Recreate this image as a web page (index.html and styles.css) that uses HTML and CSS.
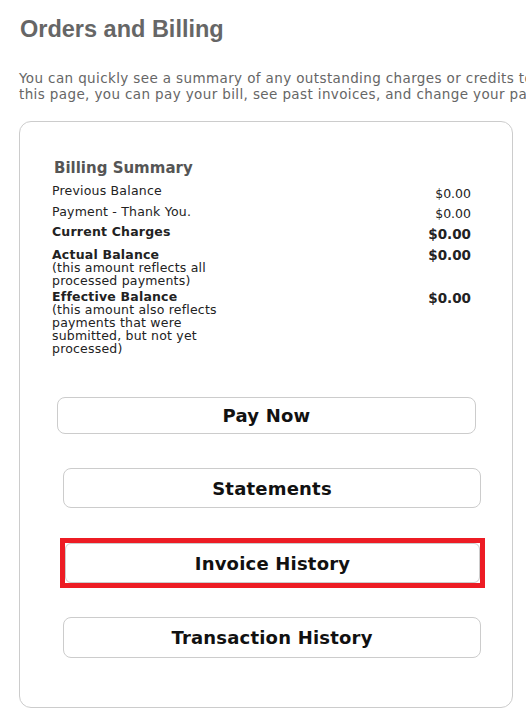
FILE: index.html
```html
<!DOCTYPE html>
<html>
<head>
<meta charset="utf-8">
<link rel="stylesheet" href="styles.css">
</head>
<body>
<div class="page">
  <h1 class="title">Orders and Billing</h1>
  <p class="intro">You can quickly see a summary of any outstanding charges or credits to your account. On<br>this page, you can pay your bill, see past invoices, and change your payment method.</p>
  <div class="card">
    <div class="summary">
      <h2 class="summary-title">Billing Summary</h2>
      <div class="row r1">
        <div class="label">Previous Balance</div>
        <div class="amount a1">$0.00</div>
      </div>
      <div class="row r2">
        <div class="label">Payment - Thank You.</div>
        <div class="amount a2">$0.00</div>
      </div>
      <div class="row r3">
        <div class="label"><b>Current Charges</b></div>
        <div class="amount big a3">$0.00</div>
      </div>
      <div class="row r4">
        <div class="label"><b>Actual Balance</b><br>(this amount reflects all processed payments)</div>
        <div class="amount big a4">$0.00</div>
      </div>
      <div class="row r5">
        <div class="label"><b>Effective Balance</b><br>(this amount also reflects payments that were submitted, but not yet processed)</div>
        <div class="amount big a5">$0.00</div>
      </div>
    </div>
    <div class="actions">
      <button class="btn btn-pay">Pay Now</button>
      <button class="btn btn-statements">Statements</button>
      <div class="highlight">
        <button class="btn btn-invoice">Invoice History</button>
      </div>
      <button class="btn btn-transactions">Transaction History</button>
    </div>
  </div>
</div>
</body>
</html>
```

FILE: styles.css
```css
html, body {
  margin: 0;
  padding: 0;
  background: #fff;
  overflow: hidden;
}
.page {
  padding: 16px 0 0 19px;
  width: 494px;
  font-family: "DejaVu Sans", Verdana, sans-serif;
}
.title {
  font-family: "Liberation Sans", Arial, sans-serif;
  font-weight: bold;
  font-size: 23.5px;
  line-height: 27px;
  color: #666;
  margin: 0 0 0 1px;
}
.intro {
  margin: 27px 0 0 0;
  font-size: 13.5px;
  letter-spacing: 0.38px;
  line-height: 16px;
  color: #666;
  white-space: nowrap;
}
.card {
  margin-top: 19px;
  border: 1px solid #ccc;
  border-radius: 12px;
  height: 587px;
  box-sizing: border-box;
  padding: 37px 0 0 32px;
}
.summary {
  width: 419px;
  color: #222;
}
.summary-title {
  font-size: 15px;
  font-weight: bold;
  color: #555;
  margin: 0 0 7px 2px;
  line-height: 18px;
}
.row {
  display: flex;
  align-items: flex-start;
  justify-content: space-between;
  font-size: 12.5px;
  letter-spacing: 0.2px;
  line-height: 13px;
}
.r1 { margin-bottom: 8px; }
.r2 { margin-bottom: 7px; }
.r3 { margin-bottom: 10px; }
.r4 { margin-bottom: 3px; }
.label {
  width: 172px;
}
.amount {
  text-align: right;
  letter-spacing: 0;
}
.amount.big {
  font-size: 13.5px;
  font-weight: bold;
}
.a1 { padding-top: 3px; margin-bottom: -3px; }
.a2 { padding-top: 2px; margin-bottom: -2px; }
.a3 { padding-top: 3px; margin-bottom: -3px; }
.a4 { padding-top: 1px; }
.a5 { padding-top: 2px; }
.actions {
  display: flex;
  flex-direction: column;
  margin-top: 42px;
}
.btn {
  display: block;
  background: #fff;
  border: 1px solid #ccc;
  border-radius: 8px;
  font-family: "DejaVu Sans", Verdana, sans-serif;
  font-weight: bold;
  font-size: 18px;
  letter-spacing: 0.2px;
  color: #111;
  padding: 0;
  box-sizing: border-box;
}
.btn-pay {
  margin-left: 5px;
  width: 419px;
  height: 37px;
}
.btn-statements {
  margin-left: 11px;
  width: 418px;
  height: 40px;
  margin-top: 34px;
}
.highlight {
  margin-left: 8px;
  margin-top: 30px;
  width: 425px;
  height: 50px;
  border: 5px solid #ed1c24;
  box-sizing: border-box;
  padding: 0;
}
.btn-invoice {
  width: 415px;
  height: 40px;
  border-radius: 6px;
}
.btn-transactions {
  margin-left: 11px;
  width: 418px;
  height: 41px;
  margin-top: 29px;
}
```
